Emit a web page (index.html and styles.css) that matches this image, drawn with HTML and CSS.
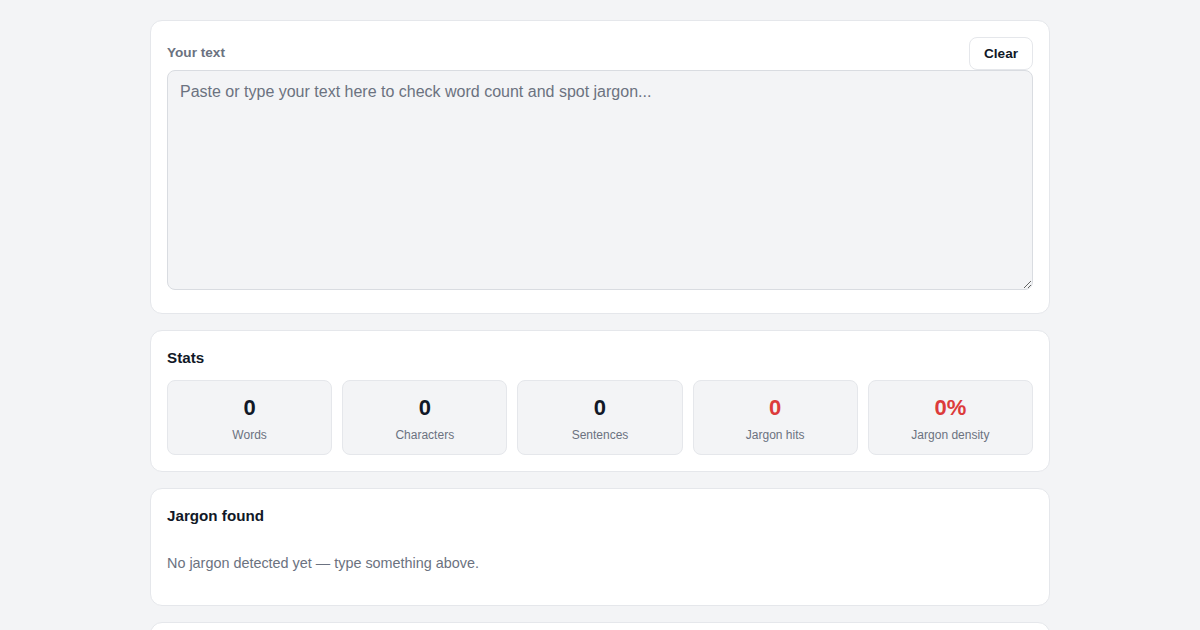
FILE: index.html
```html
<!DOCTYPE html>
<html lang="en">
<head>
<meta charset="utf-8">
<title>Word count &amp; jargon checker</title>
<link rel="stylesheet" href="styles.css">
</head>
<body>
<main class="page">
  <section class="card">
    <div class="input-head">
      <label class="label" for="txt">Your text</label>
      <button class="btn" type="button">Clear</button>
    </div>
    <textarea id="txt" class="textarea" placeholder="Paste or type your text here to check word count and spot jargon..."></textarea>
  </section>

  <section class="card">
    <h2 class="card-title">Stats</h2>
    <div class="stats">
      <div class="stat"><div class="stat-num">0</div><div class="stat-label">Words</div></div>
      <div class="stat"><div class="stat-num">0</div><div class="stat-label">Characters</div></div>
      <div class="stat"><div class="stat-num">0</div><div class="stat-label">Sentences</div></div>
      <div class="stat"><div class="stat-num stat-num--warn">0</div><div class="stat-label">Jargon hits</div></div>
      <div class="stat"><div class="stat-num stat-num--warn">0%</div><div class="stat-label">Jargon density</div></div>
    </div>
  </section>

  <section class="card">
    <h2 class="card-title">Jargon found</h2>
    <p class="empty">No jargon detected yet — type something above.</p>
  </section>

  <section class="card card--tail"></section>
</main>
</body>
</html>
```

FILE: styles.css
```css
* { box-sizing: border-box; }

html, body {
  margin: 0;
  padding: 0;
  background: #f3f4f6;
  font-family: "Liberation Sans", Arial, sans-serif;
  color: #111827;
}

.page {
  width: 900px;
  margin: 0 auto;
  padding-top: 20px;
  display: flex;
  flex-direction: column;
  gap: 16px;
}

.card {
  background: #ffffff;
  border: 1px solid #e5e7eb;
  border-radius: 12px;
  padding: 16px;
}

.card--tail {
  height: 80px;
}

.input-head {
  display: flex;
  align-items: center;
  justify-content: space-between;
  height: 33px;
}

.label {
  font-size: 13.6px;
  font-weight: 700;
  color: #6b7280;
  margin-top: -2px;
}

.btn {
  font-family: inherit;
  font-size: 13.6px;
  font-weight: 700;
  color: #111827;
  background: #ffffff;
  border: 1px solid #e5e7eb;
  border-radius: 8px;
  height: 33px;
  padding: 0 14px;
  cursor: pointer;
}

.textarea {
  display: block;
  width: 100%;
  height: 220px;
  margin: 0 0 7px;
  padding: 11px 12px;
  background: #f3f4f6;
  border: 1px solid #d9dce1;
  border-radius: 8px;
  font-family: inherit;
  font-size: 16px;
  line-height: 20px;
  color: #111827;
  resize: vertical;
}

.textarea::placeholder {
  color: #6b7280;
}

.card-title {
  margin: 0 0 12px;
  padding-top: 1px;
  font-size: 15.2px;
  line-height: 20px;
  font-weight: 700;
  color: #111827;
}

.stats {
  display: grid;
  grid-template-columns: repeat(5, 1fr);
  gap: 10px;
}

.stat {
  background: #f3f4f6;
  border: 1px solid #e5e7eb;
  border-radius: 8px;
  padding: 14px 8px 11px;
  text-align: center;
}

.stat-num {
  font-size: 22px;
  line-height: 26px;
  font-weight: 700;
  color: #111827;
}

.stat-num--warn {
  color: #dc3b3b;
}

.stat-label {
  margin-top: 6px;
  font-size: 12px;
  line-height: 16px;
  color: #6b7280;
}

.empty {
  margin: 0;
  padding: 15px 0 16px;
  font-size: 14.4px;
  line-height: 20px;
  color: #6b7280;
}
```
